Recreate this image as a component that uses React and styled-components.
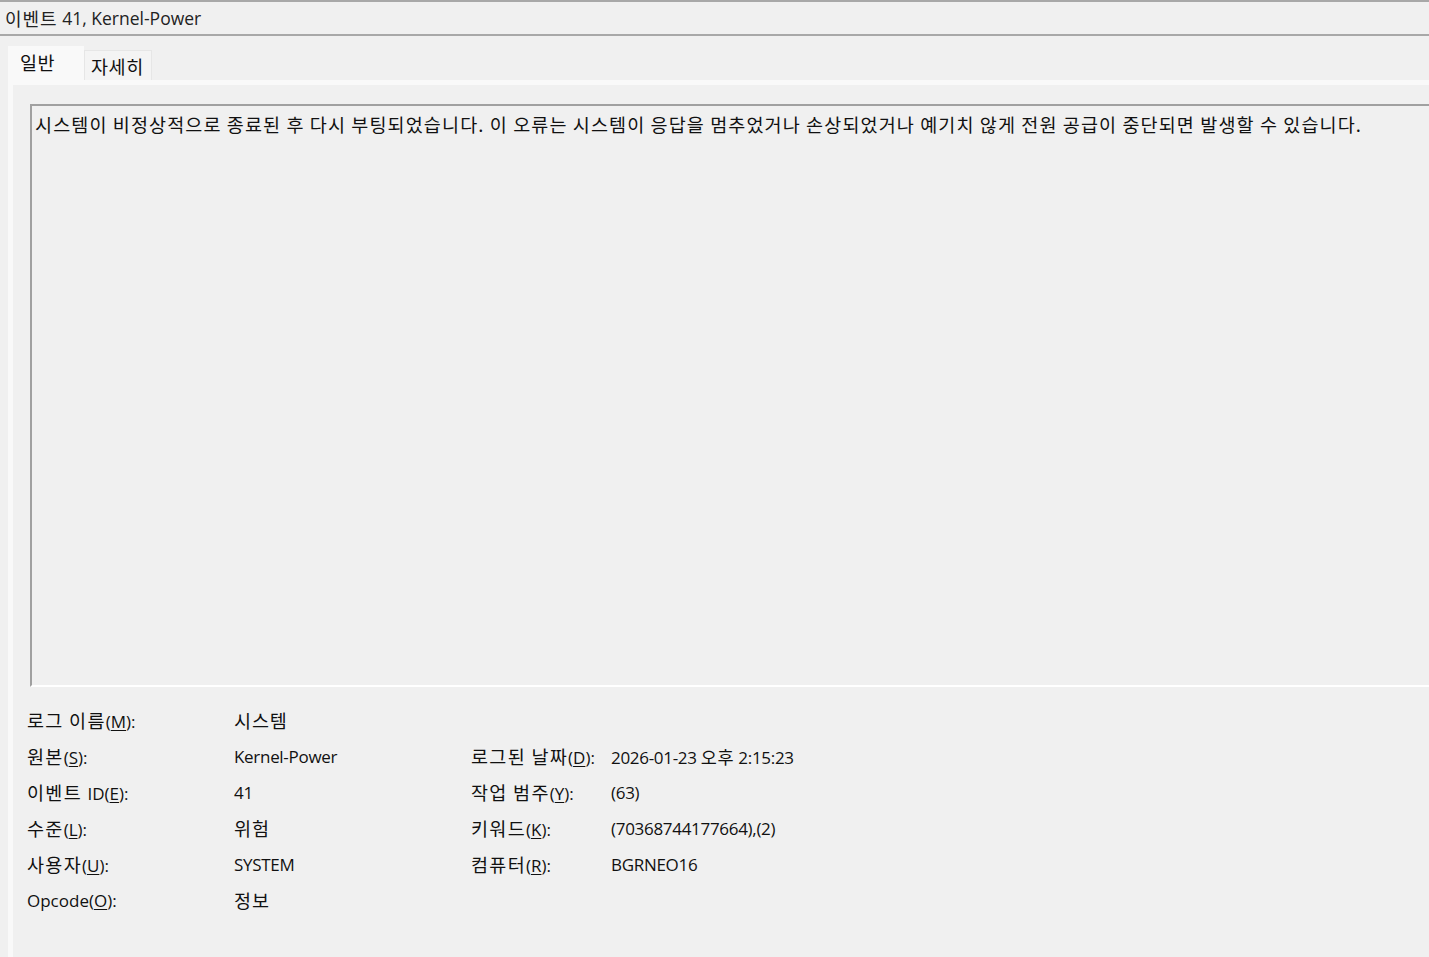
import React from 'react';
import styled, {createGlobalStyle} from 'styled-components';

const Global = createGlobalStyle`
    html, body {
        margin: 0;
        padding: 0;
        background: #f0f0f0;
        overflow: hidden;
    }
    body {
        font-family: "Open Sans", "Noto Sans CJK KR", sans-serif;
        color: #1a1a1a;
    }
`

const Window = styled.div`
    width: 1429px;
    height: 957px;
    display: flex;
    flex-direction: column;
    background: #f0f0f0;
`

const TitleBar = styled.div`
    height: 32px;
    border-top: 2px solid #a8a8a8;
    border-bottom: 2px solid #a8a8a8;
    display: flex;
    align-items: center;
    padding-left: 5px;
    font-size: 17.5px;
    color: #222;
    white-space: pre;
`

// Hangul runs: Malgun Gothic is larger than Noto CJK at the same size
const Ko = styled.span`
    font-family: "Noto Sans CJK KR", sans-serif;
    font-size: ${p => p.$size || 18.5}px;
    letter-spacing: ${p => p.$ls ?? 1.3}px;
`

const Body = styled.div`
    flex: 1;
    padding: 10px 0 0 8px;
    display: flex;
    flex-direction: column;
`

const TabStrip = styled.div`
    display: flex;
    align-items: flex-end;
    height: 34px;
`

const Tab = styled.div`
    height: ${p => p.$active ? '34px' : '30px'};
    width: ${p => p.$width}px;
    background: ${p => p.$active ? '#f9f9f9' : '#f4f4f4'};
    border: 1px solid ${p => p.$active ? '#f9f9f9' : '#e6e6e6'};
    border-bottom: none;
    box-sizing: border-box;
    display: flex;
    align-items: center;
    padding-left: ${p => p.$active ? '11px' : '6px'};
    padding-bottom: ${p => p.$active ? '4px' : '0'};
    font-family: "Noto Sans CJK KR", sans-serif;
    font-size: 18.5px;
    letter-spacing: 0.6px;
    color: #111;
`

const Panel = styled.div`
    flex: 1;
    border-left: 5px solid #f9f9f9;
    border-top: 5px solid #f9f9f9;
    padding: 19px 0 0 17px;
    display: flex;
    flex-direction: column;
`

const DescBox = styled.div`
    height: 574px;
    border-top: 2px solid #a0a0a0;
    border-left: 2px solid #a0a0a0;
    border-bottom: 2px solid #ffffff;
    padding: 5px 0 0 3px;
    font-family: "Noto Sans CJK KR", sans-serif;
    font-size: 18.5px;
    line-height: 26px;
    letter-spacing: 1.11px;
    color: #111;
    white-space: nowrap;
`

const Fields = styled.div`
    display: grid;
    grid-template-columns: 207px 237px 140px 1fr;
    grid-auto-rows: 36px;
    padding: 15px 0 0 0;
    margin-left: -3px;
    font-size: 17px;
    color: #111;
    align-items: center;
`

const Label = styled.div`
    white-space: pre;
    u { text-underline-offset: 2px; }
`

const Value = styled.div`
    white-space: pre;
    letter-spacing: -0.3px;
`

const rows = [
    [<Ko>로그 이름</Ko>, 'M', <Ko $ls={0.9}>시스템</Ko>, null, null, null],
    [<Ko>원본</Ko>, 'S', 'Kernel-Power', <Ko>로그된 날짜</Ko>, 'D', <>2026-01-23 <Ko $size={17.5} $ls={0.6}>오후</Ko> 2:15:23</>],
    [<><Ko>이벤트 </Ko>ID</>, 'E', '41', <Ko>작업 범주</Ko>, 'Y', '(63)'],
    [<Ko>수준</Ko>, 'L', <Ko $ls={0.9}>위험</Ko>, <Ko>키워드</Ko>, 'K', '(70368744177664),(2)'],
    [<Ko>사용자</Ko>, 'U', 'SYSTEM', <Ko>컴퓨터</Ko>, 'R', 'BGRNEO16'],
    ['Opcode', 'O', <Ko $ls={0.9}>정보</Ko>, null, null, null],
];

const FieldLabel = ({text, k}) => (
    <Label>{text}(<u>{k}</u>):</Label>
);

const App = () => {
    return (
        <Window>
            <Global />
            <TitleBar><Ko $size={18} $ls={1}>이벤트</Ko> 41, Kernel-Power</TitleBar>
            <Body>
                <TabStrip>
                    <Tab $active $width={76}>일반</Tab>
                    <Tab $width={68}>자세히</Tab>
                </TabStrip>
                <Panel>
                    <DescBox>
                        시스템이 비정상적으로 종료된 후 다시 부팅되었습니다. 이 오류는 시스템이 응답을 멈추었거나 손상되었거나 예기치 않게 전원 공급이 중단되면 발생할 수 있습니다.
                    </DescBox>
                    <Fields>
                        {rows.map((r, i) => (
                            <React.Fragment key={i}>
                                <FieldLabel text={r[0]} k={r[1]} />
                                <Value>{r[2]}</Value>
                                {r[3] ? <FieldLabel text={r[3]} k={r[4]} /> : <div />}
                                <Value>{r[5] || ''}</Value>
                            </React.Fragment>
                        ))}
                    </Fields>
                </Panel>
            </Body>
        </Window>
    );
};

export default App;
